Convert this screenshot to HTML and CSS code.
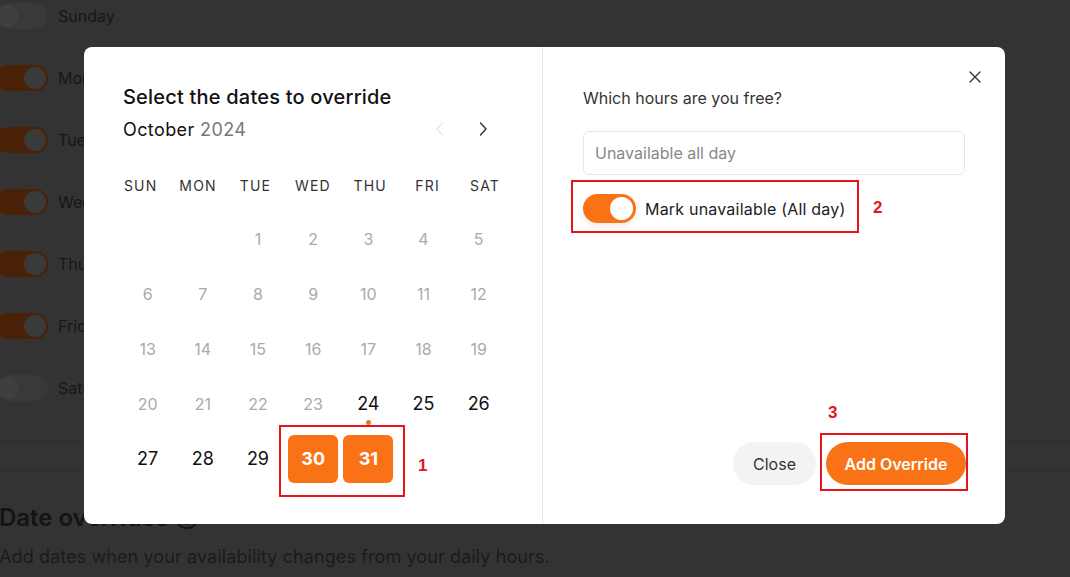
FILE: index.html
```html
<!DOCTYPE html>
<html>
<head>
<meta charset="utf-8">
<link rel="stylesheet" href="styles.css">
</head>
<body>
<div class="page">
  <div class="days">
    <div class="day-row"><span class="sw off"><span class="knob"></span></span><span class="day-name">Sunday</span></div>
    <div class="day-row"><span class="sw on"><span class="knob"></span></span><span class="day-name">Monday</span></div>
    <div class="day-row"><span class="sw on"><span class="knob"></span></span><span class="day-name">Tuesday</span></div>
    <div class="day-row"><span class="sw on"><span class="knob"></span></span><span class="day-name">Wednesday</span></div>
    <div class="day-row"><span class="sw on"><span class="knob"></span></span><span class="day-name">Thursday</span></div>
    <div class="day-row"><span class="sw on"><span class="knob"></span></span><span class="day-name">Friday</span></div>
    <div class="day-row"><span class="sw off"><span class="knob"></span></span><span class="day-name">Saturday</span></div>
  </div>
  <div class="sep-band"></div>
  <h2 class="bg-title">Date overrides ⓘ</h2>
  <p class="bg-sub">Add dates when your availability changes from your daily hours.</p>
</div>

<div class="modal">
  <div class="left">
    <h1 class="title">Select the dates to override</h1>
    <div class="month-row">
      <div class="month">October <span class="year">2024</span></div>
      <div class="navs">
        <svg class="nav dim" width="10" height="16" viewBox="0 0 10 16"><path d="M7.5 2L2 8l5.5 6" fill="none" stroke="currentColor" stroke-width="1.4" stroke-linecap="round" stroke-linejoin="round"/></svg>
        <svg class="nav" width="10" height="16" viewBox="0 0 10 16"><path d="M2.5 2L8 8l-5.5 6" fill="none" stroke="currentColor" stroke-width="1.4" stroke-linecap="round" stroke-linejoin="round"/></svg>
      </div>
    </div>
    <div class="wk-head">
      <div class="wd">SUN</div><div class="wd">MON</div><div class="wd">TUE</div><div class="wd">WED</div><div class="wd">THU</div><div class="wd">FRI</div><div class="wd">SAT</div>
    </div>
    <div class="cal">
      <div class="d"></div><div class="d"></div>
      <div class="d past">1</div><div class="d past">2</div><div class="d past">3</div><div class="d past">4</div><div class="d past">5</div>
      <div class="d past">6</div><div class="d past">7</div><div class="d past">8</div><div class="d past">9</div><div class="d past">10</div><div class="d past">11</div><div class="d past">12</div>
      <div class="d past">13</div><div class="d past">14</div><div class="d past">15</div><div class="d past">16</div><div class="d past">17</div><div class="d past">18</div><div class="d past">19</div>
      <div class="d past">20</div><div class="d past">21</div><div class="d past">22</div><div class="d past">23</div><div class="d today">24<span class="dot"></span></div><div class="d">25</div><div class="d">26</div>
      <div class="d">27</div><div class="d">28</div><div class="d">29</div><div class="d sel">30</div><div class="d sel">31</div>
    </div>
    <div class="mark mark1"></div>
    <span class="num num1">1</span>
  </div>
  <div class="right">
    <button class="x" aria-label="close">
      <svg width="14" height="14" viewBox="0 0 14 14"><path d="M2 2l10 10M12 2L2 12" stroke="#333" stroke-width="1.4" stroke-linecap="round"/></svg>
    </button>
    <div class="q">Which hours are you free?</div>
    <div class="input">Unavailable all day</div>
    <div class="toggle-row">
      <span class="tg"><span class="tg-knob"></span></span>
      <span class="tg-label">Mark unavailable (All day)</span>
    </div>
    <div class="mark mark2"></div>
    <span class="num num2">2</span>
    <div class="actions">
      <button class="btn close">Close</button>
      <button class="btn add">Add Override</button>
    </div>
    <div class="mark mark3"></div>
    <span class="num num3">3</span>
  </div>
</div>
</body>
</html>
```

FILE: styles.css
```css
* { box-sizing: border-box; }
html, body { margin: 0; padding: 0; }
body {
  width: 1070px;
  height: 577px;
  overflow: hidden;
  background: #333333;
  font-family: Inter, "Noto Sans", sans-serif;
  position: relative;
}

/* background page (dimmed) */
.page { margin-left: -5px; color: #171717; }
.days { display: flex; flex-direction: column; gap: 36px; padding-top: 3px; }
.day-row { display: flex; align-items: center; gap: 10px; height: 26px; }
.sw { width: 53px; height: 26px; border-radius: 13px; display: flex; align-items: center; padding: 2px; }
.sw.on { background: #4a2107; justify-content: flex-end; }
.sw.off { background: #393939; justify-content: flex-start; }
.knob { width: 22px; height: 22px; border-radius: 50%; background: #3a3a3a; }
.sw.off .knob { background: #3f3f3f; }
.day-name { font-size: 16px; color: #171717; }
.sep-band { margin-top: 40px; height: 30px; border-top: 1px solid #2b2b2b; border-bottom: 1px solid #2b2b2b; }
.bg-title { margin: 32px 0 0 4px; font-size: 24px; font-weight: 600; color: #141414; line-height: 30px; }
.bg-sub { margin: 12px 0 0 4px; font-size: 18px; color: #1b1b1b; line-height: 24px; letter-spacing: 0.1px; }

/* modal */
.modal {
  position: absolute;
  left: 84px;
  top: 47px;
  width: 921px;
  height: 477px;
  background: #fff;
  border-radius: 8px;
  display: grid;
  grid-template-columns: 459px 1fr;
}
.left { position: relative; padding: 38px 0 0 39px; border-right: 1px solid #e8e8e8; }
.right { position: relative; padding: 41px 40px 0 40px; }

.title { margin: 0; font-size: 20px; font-weight: 500; color: #111; line-height: 24px; letter-spacing: 0.2px; }
.month-row { display: flex; align-items: center; justify-content: space-between; margin-top: 8px; width: 365px; height: 24px; }
.month { font-size: 18px; color: #111; letter-spacing: 0.4px; }
.year { color: #777; }
.navs { display: flex; gap: 33px; align-items: center; }
.nav { color: #333; display: block; }
.nav.dim { color: #e6e6e6; }

.wk-head {
  margin: 34px 0 0 -11px;
  display: grid;
  grid-template-columns: repeat(7, 57.4px);
  height: 20px;
  align-items: center;
  justify-items: center;
}
.wd { font-size: 14px; letter-spacing: 1.2px; color: #333; }
.cal {
  margin: 16px 0 0 -3px;
  display: grid;
  grid-template-columns: repeat(7, 55.2px);
  grid-auto-rows: 55px;
  align-items: center;
  justify-items: center;
}
.d { position: relative; font-size: 18px; color: #111; width: 50px; height: 48px; display: flex; align-items: center; justify-content: center; }
.d.past { color: #aaa; font-size: 16px; }
.d.sel { background: #f97316; color: #fff; font-weight: 700; font-size: 18px; border-radius: 6px; }
.dot { position: absolute; left: 50%; bottom: 3px; width: 5px; height: 5px; margin-left: -2.5px; border-radius: 50%; background: #f97316; }

.mark { position: absolute; border: 2px solid #e8141c; pointer-events: none; }
.num { position: absolute; color: #e8141c; font-weight: 700; font-size: 17px; font-family: "Liberation Sans", Arial, sans-serif; }
.mark1 { left: 195px; top: 378px; width: 126px; height: 72px; }
.num1 { left: 334px; top: 409px; }

.x { position: absolute; right: 22px; top: 22px; border: 0; background: none; padding: 0; width: 16px; height: 16px; display: flex; align-items: center; justify-content: center; }
.q { font-size: 16px; color: #333; line-height: 20px; }
.input { margin-top: 23px; height: 44px; border: 1px solid #e6e6e6; border-radius: 6px; padding: 0 11px; display: flex; align-items: center; font-size: 16px; color: #888; }
.toggle-row { margin-top: 19px; display: flex; align-items: center; gap: 9px; }
.tg { width: 53px; height: 29px; border-radius: 15px; background: #f97316; display: flex; align-items: center; justify-content: flex-end; padding: 3px; box-shadow: 0 3px 6px rgba(0,0,0,0.08); }
.tg-knob { width: 23px; height: 23px; border-radius: 50%; background: #fff; }
.tg-label { font-size: 16px; color: #222; letter-spacing: 0.2px; }
.mark2 { left: 28px; top: 133px; width: 288px; height: 53px; }
.num2 { left: 330px; top: 151px; }

.actions { position: absolute; right: 39px; top: 395px; display: flex; gap: 10px; }
.btn { border: 0; height: 43px; border-radius: 22px; font-family: inherit; font-size: 16px; }
.btn.close { width: 83px; background: #f3f3f3; color: #333; }
.btn.add { width: 140px; background: #f97316; color: #fff; font-weight: 600; }
.mark3 { left: 277px; top: 386px; width: 148px; height: 58px; }
.num3 { left: 285px; top: 356px; }
```
